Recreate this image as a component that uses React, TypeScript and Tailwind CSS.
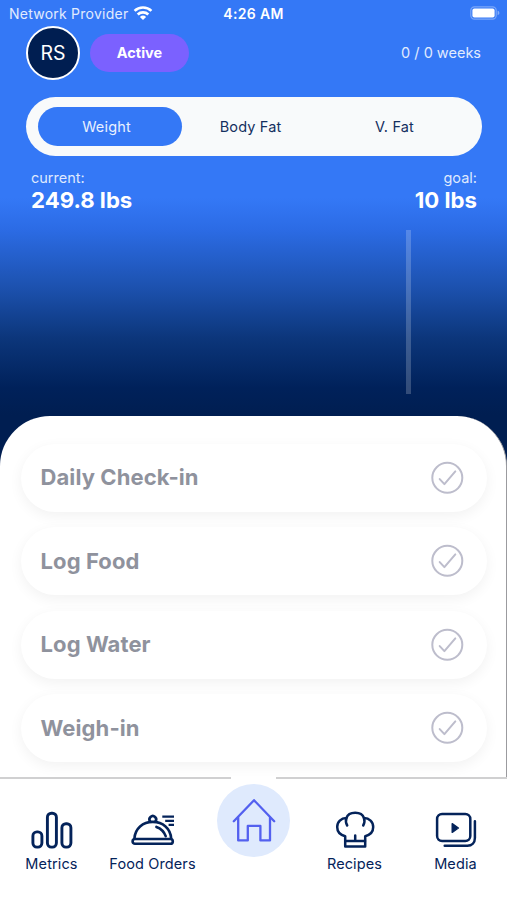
import React, { useState } from 'react';

interface IconProps {
  className?: string;
}

const WifiIcon = ({ className }: IconProps) => (
  <svg viewBox="0 0 20 15" className={className} fill="none" stroke="currentColor" strokeWidth="2.7">
    <path d="M1.6 4.9a12.1 12.1 0 0 1 16.8 0" />
    <path d="M4.7 8.4a7.7 7.7 0 0 1 10.6 0" />
    <path d="M10 13.9 6.9 10.9a4.5 4.5 0 0 1 6.2 0Z" fill="currentColor" stroke="none" />
  </svg>
);

const BatteryIcon = ({ className }: IconProps) => (
  <svg viewBox="0 0 30 14" className={className} fill="none">
    <rect x="0.8" y="0.8" width="25.4" height="12.4" rx="3.6" stroke="white" strokeOpacity="0.35" strokeWidth="1.2" />
    <rect x="2.4" y="2.4" width="22.2" height="9.2" rx="2" fill="white" />
    <path d="M27.6 4.8c1.1.3 1.8 1.2 1.8 2.2s-.7 1.9-1.8 2.2Z" fill="white" fillOpacity="0.4" />
  </svg>
);

const MetricsIcon = ({ className }: IconProps) => (
  <svg viewBox="0 0 48 44" className={className} fill="none" stroke="currentColor" strokeWidth="2.9">
    <rect x="4.9" y="23.9" width="9" height="15.2" rx="4" />
    <rect x="19.4" y="5.2" width="9" height="33.9" rx="4" />
    <rect x="33.9" y="15.7" width="9" height="23.4" rx="4" />
  </svg>
);

const FoodIcon = ({ className }: IconProps) => (
  <svg viewBox="0 0 48 44" className={className} fill="none" stroke="currentColor" strokeWidth="2.6" strokeLinecap="round" strokeLinejoin="round">
    <path d="M5.4 30.6C6 20.4 13.8 13.9 23.8 13.9S41.6 20.4 42.2 30.6" />
    <rect x="3.6" y="31" width="40.2" height="4.8" rx="2.4" />
    <path d="M21.3 13.6a3.3 3.3 0 1 1 5 0" />
    <path d="M27.4 18.9c4.6 1.6 7.8 4.9 9.3 9.3" />
    <path d="M33.3 8.7H45M36.2 12.8H45M39.6 16.9H45" strokeLinecap="butt" strokeWidth="2.2" />
  </svg>
);

const HomeIcon = ({ className }: IconProps) => (
  <svg viewBox="0 0 48 48" className={className} fill="none" stroke="currentColor" strokeWidth="2.3" strokeLinecap="round" strokeLinejoin="round">
    <path d="M3.8 24.2 24 3.2l20.2 21" />
    <path d="M8.2 20.6v22.8h9.6V28.9h12.6v14.5H40V20.6" />
  </svg>
);

const ChefIcon = ({ className }: IconProps) => (
  <svg viewBox="0 0 48 44" className={className} fill="none" stroke="currentColor" strokeWidth="2.5" strokeLinecap="round" strokeLinejoin="round">
    <path d="M14.2 38.6V28.2c-4.8-1.2-8-4.6-8-9.2 0-5.2 3.9-8.9 9.2-8.9 1-3.2 4.4-5.3 8.8-5.3s7.8 2.1 8.8 5.3c5.3 0 9.2 3.7 9.2 8.9 0 4.6-3.2 8-8 9.2v10.4Z" />
    <path d="M14.4 33.1H34M24.2 27.4v5.4M15.4 10.1c-.8 2.4-.6 5 .8 7.4M33 10.1c.8 2.4.6 5-.8 7.4" />
  </svg>
);

const MediaIcon = ({ className }: IconProps) => (
  <svg viewBox="0 0 48 44" className={className} fill="none" stroke="currentColor" strokeWidth="2.5" strokeLinecap="round" strokeLinejoin="round">
    <rect x="5.1" y="6" width="33.2" height="27" rx="5" />
    <path d="M42.9 13.2V30c0 4.5-3 7.7-7.5 7.7H12.7" />
    <path d="m20.2 15.7 6.2 4.3-6.2 4.3Z" fill="currentColor" strokeWidth="1.4" />
  </svg>
);

const CheckIcon = ({ className }: IconProps) => (
  <svg viewBox="0 0 34 34" className={className} fill="none" stroke="currentColor" strokeWidth="2" strokeLinecap="round" strokeLinejoin="round">
    <circle cx="17.3" cy="16.8" r="15" />
    <path d="m9.7 18.1 4.7 5 10.9-12.7" />
  </svg>
);

const TABS = ['Weight', 'Body Fat', 'V. Fat'];
const TASKS = ['Daily Check-in', 'Log Food', 'Log Water', 'Weigh-in'];

interface NavItemProps {
  icon: React.ElementType;
  label: string;
}

const NavItem = ({ icon: Icon, label }: NavItemProps) => (
  <button className="flex w-[101px] flex-col items-center pt-[29px] text-[#04235a]">
    <Icon className="h-11 w-12" />
    <span className="mt-0.5 whitespace-nowrap text-[14.5px] leading-5 tracking-[0.12px]">{label}</span>
  </button>
);

export default function App() {
  const [activeTab, setActiveTab] = useState('Weight');

  return (
    <div className="flex h-[900px] w-[507px] flex-col overflow-hidden bg-[linear-gradient(to_bottom,#3478f6_0px,#3478f6_198px,#2c6ce6_228px,#1c51ae_288px,#0c367b_338px,#00215a_388px,#001e51_415px)] font-['Inter',sans-serif] text-white">
      {/* Status bar */}
      <div className="grid h-[26px] shrink-0 grid-cols-3 items-center pr-[7px] pb-px pl-[9px] text-[14px]">
        <div className="flex items-center gap-[5px] pt-px whitespace-nowrap tracking-[0.24px] text-[#e1ebfe]">
          Network Provider
          <WifiIcon className="h-[15px] w-5 shrink-0 text-white" />
        </div>
        <div className="pt-px pr-0.5 text-center font-semibold tracking-[0.35px]">4:26 AM</div>
        <BatteryIcon className="h-3.5 w-[30px] justify-self-end" />
      </div>

      {/* Profile row */}
      <div className="flex h-[54px] shrink-0 items-center pr-[26px] pl-[26px]">
        <div className="flex size-[54px] items-center justify-center rounded-full border-2 border-white bg-[#001e51] pt-px text-[19.5px]">RS</div>
        <div className="ml-2.5 flex h-[38px] w-[99px] items-center justify-center rounded-full bg-[#7b61ff] text-[14.5px] font-bold">
          Active
        </div>
        <div className="ml-auto text-[14.5px] text-[#e1ebfe]">0 / 0 weeks</div>
      </div>

      {/* Metric tabs */}
      <div className="mt-[17px] mr-[25px] ml-[26px] flex h-[59px] shrink-0 items-center rounded-full bg-[#f8fafb] px-3">
        {TABS.map((tab) => (
          <button
            key={tab}
            onClick={() => setActiveTab(tab)}
            className={`h-[39px] w-36 rounded-full pr-[7px] text-[14.5px] tracking-[0.15px] ${tab === activeTab ? 'bg-[#3478f6] text-[#e8f0ff]' : 'text-[#14305f]'}`}
          >
            {tab}
          </button>
        ))}
      </div>

      <div className="mt-3 flex shrink-0 justify-between pr-[30px] pl-[31px]">
        <div>
          <p className="text-[14.5px] leading-5 text-[#dfe9fe]">current:</p>
          <p className="text-[22.2px] leading-6 font-bold">249.8 lbs</p>
        </div>
        <div className="text-right">
          <p className="text-[14.5px] leading-5 text-[#dfe9fe]">goal:</p>
          <p className="text-[22.2px] leading-6 font-bold">10 lbs</p>
        </div>
      </div>

      {/* Chart area */}
      <div className="flex h-[204px] shrink-0 justify-end pt-[18px] pr-[96px]">
        <div className="h-[164px] w-[5px] bg-white/20" />
      </div>

      {/* Tasks */}
      <main className="flex h-[361px] shrink-0 flex-col gap-[15.5px] overflow-hidden rounded-t-[50px] border-r border-[#9b9b9f] bg-white pt-[27.5px] pr-[19px] pl-[21px]">
        {TASKS.map((task) => (
          <div key={task} className="flex h-[68px] shrink-0 items-center justify-between rounded-full bg-white pr-[23px] pl-[19.5px] shadow-[0_4px_14px_rgba(0,0,0,0.055)]">
            <span className="text-[22px] font-bold tracking-[0.1px] text-[#8f929d]">{task}</span>
            <CheckIcon className="size-[34px] text-[#bdbdcc]" />
          </div>
        ))}
      </main>

      {/* Bottom nav */}
      <nav className="flex h-[123px] shrink-0 flex-col bg-white">
        <div className="flex h-0.5 shrink-0 justify-between">
          <div className="w-[231px] bg-[#d0d0d1]" />
          <div className="w-[231px] bg-[#d0d0d1]" />
        </div>
        <div className="flex justify-center">
          <NavItem icon={MetricsIcon} label="Metrics" />
          <NavItem icon={FoodIcon} label="Food Orders" />
          <div className="flex w-[101px] justify-center pt-[5px]">
            <button className="flex size-[73px] items-center justify-center rounded-full bg-[#dfeafd] text-[#5360ef]">
              <HomeIcon className="size-12" />
            </button>
          </div>
          <NavItem icon={ChefIcon} label="Recipes" />
          <NavItem icon={MediaIcon} label="Media" />
        </div>
      </nav>
    </div>
  );
}
